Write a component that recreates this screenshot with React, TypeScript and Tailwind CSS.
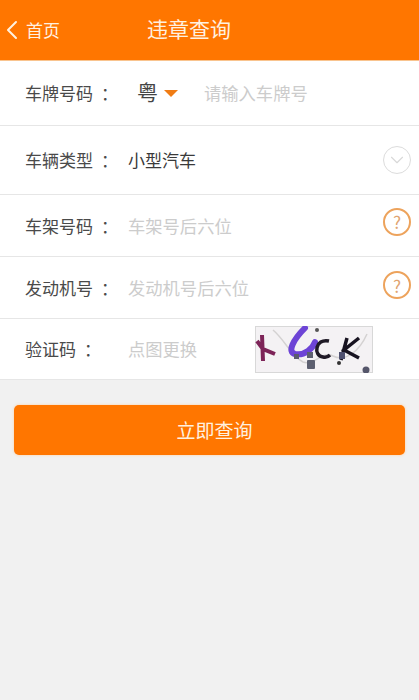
import React from 'react';
import { ChevronLeft, ChevronDown } from 'lucide-react';

const cjk = { fontFamily: '"Noto Sans CJK SC", sans-serif' };

const Help = ({ className }: { className: string }) => (
  <div className={`w-[28px] h-[28px] rounded-full border-2 border-[#eda35c] flex items-center justify-center text-[17px] leading-none text-[#e0a470] ${className}`}>?</div>
);

const Captcha = () => (
  <svg width="118" height="47" viewBox="0 0 118 47" className="block">
    <rect x="0.5" y="0.5" width="117" height="46" fill="#f4f2f4" stroke="#d8d8d8" />
    <path d="M18 4 C30 14 36 30 48 36 C60 40 68 24 78 30 C90 36 104 26 112 8" fill="none" stroke="#d4d2d2" strokeWidth="1.5" />
    <path d="M7 9 L8 35 M2 15 L8 23 L20 28" fill="none" stroke="#7d2458" strokeWidth="4" />
    <path d="M50 2 C38 14 32 26 40 28 C50 30 58 22 60 16" fill="none" stroke="#6d44d6" strokeWidth="6" strokeLinecap="round" />
    <path d="M74 15 C60 12 58 30 68 31 C71 32 74 30 75 29" fill="none" stroke="#1f1a26" strokeWidth="3.5" />
    <path d="M92 12 L86 34 M104 12 L89 24 L104 32" fill="none" stroke="#171320" strokeWidth="3.5" />
    <rect x="39" y="28" width="5" height="5" fill="#5b5b6e" />
    <rect x="52" y="34" width="8" height="9" rx="1" fill="#5d6070" />
    <rect x="52" y="26" width="6" height="6" fill="#5d6070" />
    <rect x="84" y="26" width="6" height="7" fill="#4f5170" />
    <circle cx="62" cy="4" r="2" fill="#555" />
    <circle cx="84" cy="37" r="2" fill="#333" />
    <circle cx="111" cy="44" r="3.5" fill="#55566a" />
  </svg>
);

function Row({ label, height, children, right }: { label: string; height: string; children?: React.ReactNode; right?: React.ReactNode }) {
  return (
    <div className={`flex items-center bg-white border-b border-[#e6e6e6] pl-[25px] pr-[8px] ${height}`}>
      <div className="w-[103px] shrink-0 flex text-[17px] text-[#4a4a4a] whitespace-nowrap">
        {label}
        <span className="ml-[8px]">：</span>
      </div>
      <div className="flex-1 flex items-center min-w-0">{children}</div>
      {right}
    </div>
  );
}

const App: React.FC = () => {
  return (
    <div className="w-[419px] h-[700px] bg-[#f1f1f1] overflow-hidden" style={cjk}>
      <div className="h-[61px] bg-[#ff7600] flex items-center text-[#fff1e0] border-b border-[#f9c48f]">
        <ChevronLeft size={32} strokeWidth={1.5} className="-ml-[4px] shrink-0" />
        <span className="text-[17px] -ml-[2px]">首页</span>
        <span className="text-[21px] ml-[87px] -mt-[2px]">违章查询</span>
      </div>
      <Row label="车牌号码" height="h-[65px]">
        <span className="text-[21px] text-[#444] ml-[9px] -mt-[2px]">粤</span>
        <span className="ml-[6px] w-0 h-0 border-x-[7px] border-x-transparent border-t-[7px] border-t-[#f07c14]" />
        <span className="ml-[26px] text-[17.3px] text-[#cccccc]">请输入车牌号</span>
      </Row>
      <Row
        label="车辆类型"
        height="h-[69px]"
        right={
          <div className="w-[28px] h-[28px] -ml-[1px] rounded-full border border-[#dcdcdc] flex items-center justify-center text-[#d8d8d8]">
            <ChevronDown size={22} strokeWidth={1.2} />
          </div>
        }
      >
        <span className="text-[17px] text-[#3a3a3a]">小型汽车</span>
      </Row>
      <Row label="车架号码" height="h-[62px]" right={<Help className="mb-[8px]" />}>
        <span className="text-[17.3px] text-[#cccccc]">车架号后六位</span>
      </Row>
      <Row label="发动机号" height="h-[62px]" right={<Help className="mb-[5px]" />}>
        <span className="text-[17.3px] text-[#cccccc]">发动机号后六位</span>
      </Row>
      <Row label="验证码" height="h-[61px]">
        <span className="text-[17.3px] text-[#cccccc]">点图更换</span>
        <div className="ml-[58px]">
          <Captcha />
        </div>
      </Row>
      <div className="px-[14px] pt-[25px]">
        <button className="w-full h-[50px] pl-[10px] rounded-[5px] bg-[#ff7600] text-[#fff1e0] text-[19px] shadow-[0_0_3px_#ffcf9f]">立即查询</button>
      </div>
    </div>
  );
};

export default App;
